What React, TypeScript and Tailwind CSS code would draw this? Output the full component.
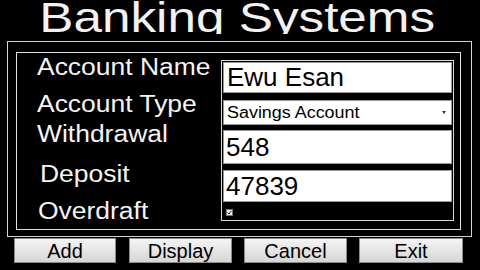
import React from "react";

const Label = ({ children, mt, ml }: { children: React.ReactNode; mt: string; ml?: string }) => (
  <div className={`h-[23px] leading-none text-[23px] text-[#f4f4f4] whitespace-nowrap ${mt} ${ml ?? ""}`}>
    <span className="inline-block origin-left scale-x-[1.15]">{children}</span>
  </div>
);

const Btn = ({ label, w, ml }: { label: string; w: string; ml: string }) => (
  <div
    className={`${w} ${ml} h-[25px] flex items-center justify-center border border-[#8c8c8c] bg-gradient-to-b from-[#f4f4f4] to-[#d6d6d6] text-[20px] leading-none text-black`}
  >
    {label}
  </div>
);

export default function App() {
  return (
    <div className="w-[480px] h-[270px] bg-black overflow-hidden font-['Liberation_Sans',Arial,sans-serif]">
      <div className="h-[34px] overflow-hidden flex justify-center pr-[5px]">
        <div className="text-[42px] leading-none -mt-[3px] text-[#f2f2f2] whitespace-nowrap">
          <span className="inline-block scale-x-[1.22]">Banking Systems</span>
        </div>
      </div>
      <div className="mt-[7px] ml-[7px] w-[465px] h-[196px] border border-[#d4d4d4] pl-[8px] pt-[10px] pr-[10px] pb-[6px]">
        <div className="w-[445px] h-[178px] border border-[#e0e0e0] flex">
          <div className="w-[204px] pl-[20px] pt-[3px] flex flex-col">
            <Label mt="mt-0">Account Name</Label>
            <Label mt="mt-[14px]">Account Type</Label>
            <Label mt="mt-[7px]">Withdrawal</Label>
            <Label mt="mt-[17px]" ml="ml-[3px]">Deposit</Label>
            <Label mt="mt-[14px]" ml="ml-[1px]">Overdraft</Label>
          </div>
          <div className="w-[233px] h-[161px] mt-[7px] border border-[#d8d8d8] px-[1px] pt-[1px] flex flex-col">
            <div className="h-[31px] bg-white border border-[#9a9a9a] flex items-center pl-[3px] text-[25px] leading-none text-black">
              <span className="inline-block origin-left scale-x-[1.04]">Ewu Esan</span>
            </div>
            <div className="h-[25px] mt-[7px] bg-white border border-[#9a9a9a] flex items-center justify-between pl-[3px] pr-[5px] text-[16px] leading-none text-black">
              <span className="inline-block origin-left scale-x-[1.12]">Savings Account</span>
              <svg width="4" height="3" viewBox="0 0 4 3">
                <path d="M0 0 L4 0 L2 3 Z" fill="#333" />
              </svg>
            </div>
            <div className="h-[34px] mt-[5px] bg-white border border-[#9a9a9a] flex items-center pl-[2px] text-[26px] leading-none text-black">
              548
            </div>
            <div className="h-[32px] mt-[6px] bg-white border border-[#9a9a9a] flex items-center pl-[2px] text-[26px] leading-none text-black">
              47839
            </div>
            <div className="mt-[7px] ml-[3px]">
              <svg width="7" height="7" viewBox="0 0 7 7" className="block">
                <rect x="0" y="0" width="7" height="7" fill="#f0f0f0" />
                <rect x="0.5" y="0.5" width="6" height="6" fill="none" stroke="#777" strokeWidth="1" />
                <path d="M1.6 3.6 L2.9 5 L5.4 1.8" fill="none" stroke="#111" strokeWidth="1" />
              </svg>
            </div>
          </div>
        </div>
      </div>
      <div className="mt-[1px] flex">
        <Btn label="Add" w="w-[102px]" ml="ml-[14px]" />
        <Btn label="Display" w="w-[103px]" ml="ml-[13px]" />
        <Btn label="Cancel" w="w-[103px]" ml="ml-[12px]" />
        <Btn label="Exit" w="w-[104px]" ml="ml-[12px]" />
      </div>
    </div>
  );
}
